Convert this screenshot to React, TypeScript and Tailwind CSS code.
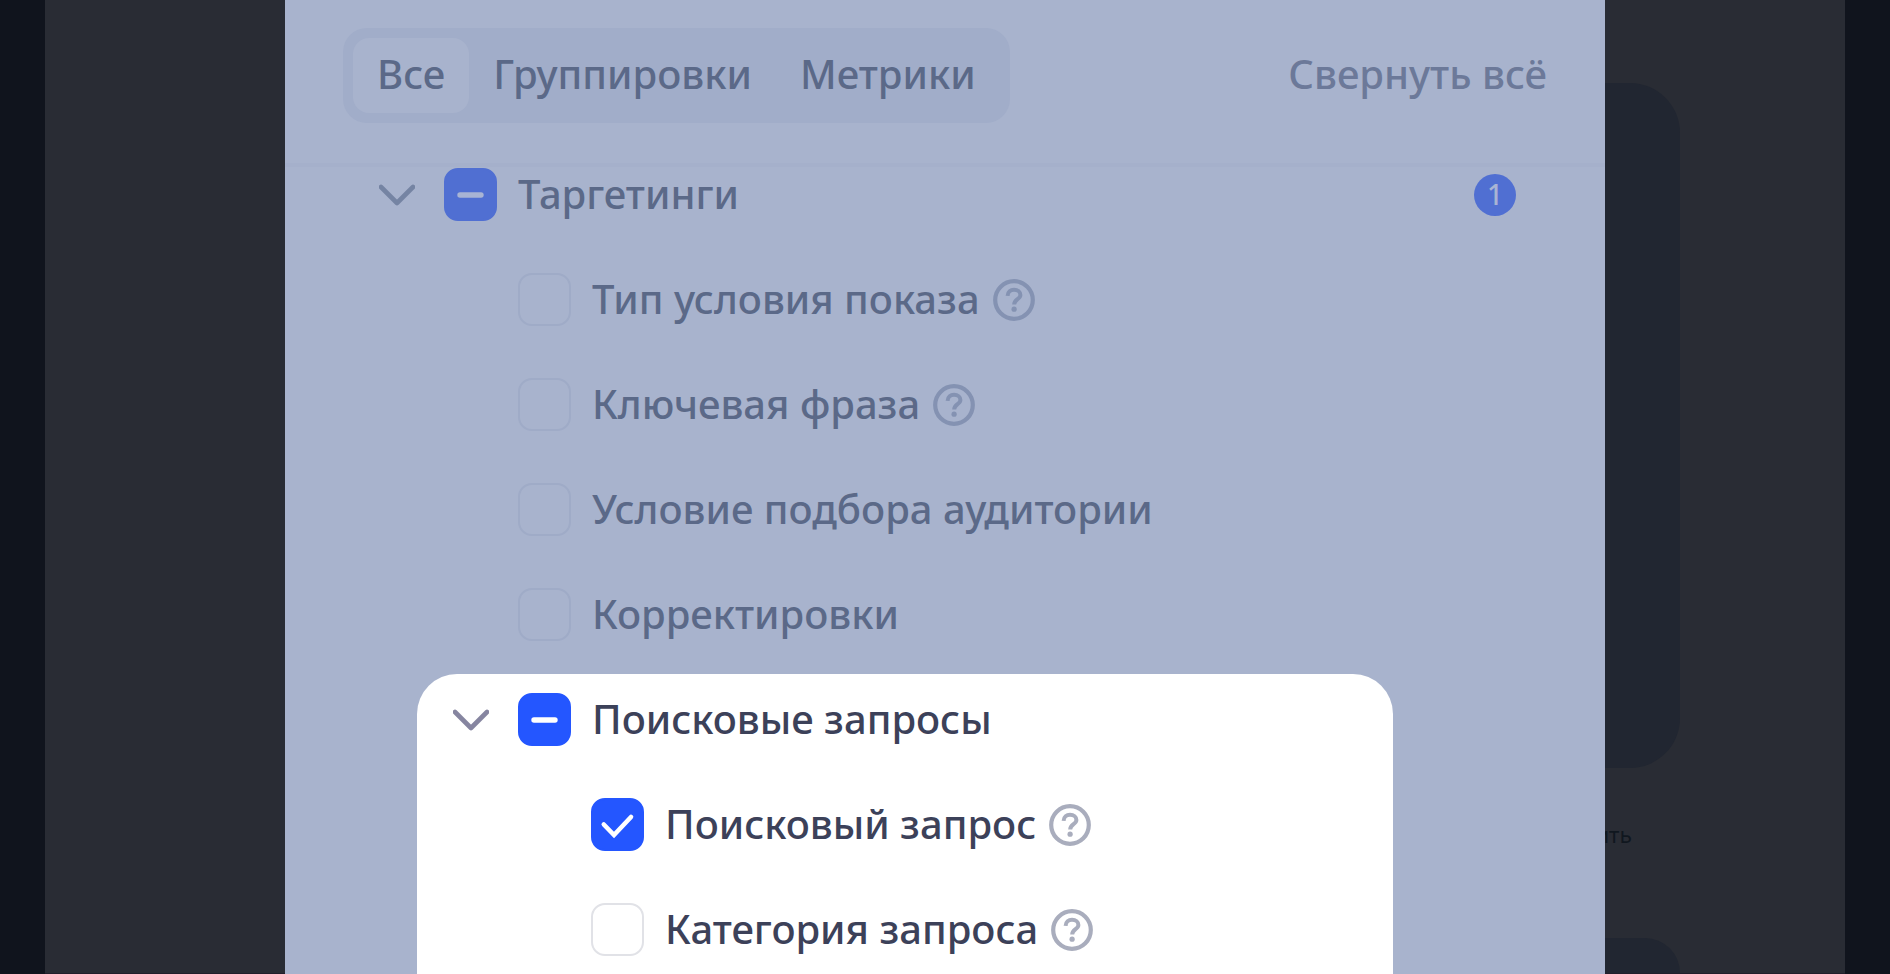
import { useEffect, useRef, useState } from "react";
import type { ReactNode } from "react";

type Tone = "dim" | "bright";

const tones = {
  dim: {
    text: "text-[#5b6988]",
    chevron: "text-[#7584a3]",
    help: "text-[#8492b2]",
    filled: "border-[#506fd2] bg-[#506fd2]",
    empty: "border-[#9fabc7] bg-transparent",
    mark: "text-[#a8b4d4]",
  },
  bright: {
    text: "text-[#3c4159]",
    chevron: "text-[#8685a0]",
    help: "text-[#a9adbd]",
    filled: "border-[#2456ff] bg-[#2456ff]",
    empty: "border-[#e1e2e7] bg-white",
    mark: "text-white",
  },
};

function Chevron({ tone }: { tone: Tone }) {
  return (
    <button type="button" aria-label="Свернуть" className={`shrink-0 ${tones[tone].chevron}`}>
      <svg viewBox="0 0 36 36" className="size-9" fill="none" stroke="currentColor" strokeWidth="4.6">
        <path d="M2 10 L18 26 L34 10" strokeLinecap="round" strokeLinejoin="round" />
      </svg>
    </button>
  );
}

function HelpIcon({ tone }: { tone: Tone }) {
  return (
    <button type="button" aria-label="Подсказка" className={`shrink-0 ${tones[tone].help}`}>
      <svg viewBox="0 0 42 42" className="size-[42px]" fill="none" stroke="currentColor">
        <circle cx="21" cy="21" r="18.8" strokeWidth="4.2" />
        <path
          d="M14.6 16.8 C14.8 12.8 17.6 10.8 21 10.8 C24.8 10.8 27.4 12.9 27.4 16 C27.4 20.2 21.2 20.2 21.2 25.4"
          strokeWidth="4"
        />
        <circle cx="21.1" cy="30.2" r="2.6" fill="currentColor" stroke="none" />
      </svg>
    </button>
  );
}

type CheckProps = {
  id: string;
  tone: Tone;
  label: string;
  initial?: boolean;
  mixed?: boolean;
};

function Check({ id, tone, label, initial = false, mixed = false }: CheckProps) {
  const ref = useRef<HTMLInputElement>(null);
  const [checked, setChecked] = useState(initial);
  const [partial, setPartial] = useState(mixed);
  const t = tones[tone];

  useEffect(() => {
    if (ref.current) ref.current.indeterminate = partial;
  }, [partial]);

  return (
    <>
      <span className="grid shrink-0 place-items-center">
        <input
          ref={ref}
          id={id}
          type="checkbox"
          checked={checked}
          onChange={(e) => {
            setPartial(false);
            setChecked(e.target.checked);
          }}
          className={`col-start-1 row-start-1 size-[53px] appearance-none rounded-[14px] border-2 ${
            checked || partial ? t.filled : t.empty
          }`}
        />
        {(checked || partial) && (
          <svg
            viewBox="0 0 53 53"
            className={`pointer-events-none col-start-1 row-start-1 size-[53px] ${t.mark}`}
            fill="none"
            stroke="currentColor"
            strokeLinecap="round"
          >
            {partial ? (
              <path d="M16 27 H37" strokeWidth="5.4" />
            ) : (
              <path d="M12.8 26.5 L23 37 L40 19" strokeWidth="4.6" />
            )}
          </svg>
        )}
      </span>
      <label htmlFor={id} className={`ml-[21px] pb-[2px] whitespace-nowrap ${t.text}`}>
        {label}
      </label>
    </>
  );
}

function Row({ className, children }: { className: string; children: ReactNode }) {
  return <div className={`flex items-center ${className}`}>{children}</div>;
}

const conditions = [
  { id: "type", label: "Тип условия показа", help: true },
  { id: "phrase", label: "Ключевая фраза", help: true },
  { id: "audience", label: "Условие подбора аудитории", help: false },
  { id: "adjust", label: "Корректировки", help: false },
];

const queries = [
  { id: "query", label: "Поисковый запрос", checked: true },
  { id: "category", label: "Категория запроса", checked: false },
];

const tabs = ["Все", "Группировки", "Метрики"];

export default function App() {
  const [active, setActive] = useState("Все");

  return (
    <div className="h-screen overflow-hidden bg-[#10141d] px-[45px] font-['Noto_Sans',sans-serif]">
      <main className="flex h-full flex-col border-b border-[#211f2b] bg-[#292c34] pt-[83px] pr-[165px] pl-[300px]">
        <section className="h-[685px] shrink-0 rounded-[50px] bg-[#212631]" />
        <div className="flex h-[170px] shrink-0 items-center justify-end pr-12 pb-9 font-['Inter',sans-serif] text-[22px] text-[#10171f]">
          <button type="button">Сохранить</button>
        </div>
        <section className="flex-1 rounded-t-[50px] bg-[#212631]" />
      </main>

      <div className="fixed inset-0 flex justify-center overflow-hidden px-6">
        <div
          role="dialog"
          aria-label="Таргетинги"
          className="flex w-full max-w-[1320px] flex-col bg-[#a8b3cd] text-[40px] leading-[48px] font-medium"
        >
          <header className="flex h-[167px] shrink-0 items-start justify-between border-b-4 border-[#a5b0cb] px-[58px] pt-7">
            <div className="flex h-[95px] items-center rounded-3xl bg-[#a1adc9] px-[10px]">
              {tabs.map((tab) => (
                <button
                  key={tab}
                  type="button"
                  onClick={() => setActive(tab)}
                  className={`h-[75px] rounded-2xl px-6 pb-1 text-[#5b6988] ${
                    active === tab ? "bg-[#a8b3cd]" : ""
                  }`}
                >
                  {tab}
                </button>
              ))}
            </div>
            <button type="button" className="h-[95px] pb-1 text-[#6c7999]">
              Свернуть всё
            </button>
          </header>

          <div className="-mt-[25px] flex-1">
            <Row className="h-[105px] pl-[94px]">
              <Chevron tone="dim" />
              <span className="w-[29px] shrink-0" />
              <Check id="targeting" tone="dim" label="Таргетинги" mixed />
              <span className="mr-[89px] ml-auto flex size-[42px] items-center justify-center rounded-full bg-[#506fd2] pb-[2px] text-[28px] leading-[28px] text-[#a8b4d4]">
                1
              </span>
            </Row>
            {conditions.map((item) => (
              <Row key={item.id} className="h-[105px] pl-[233px]">
                <Check id={item.id} tone="dim" label={item.label} />
                {item.help && (
                  <span className="ml-[13px] flex">
                    <HelpIcon tone="dim" />
                  </span>
                )}
              </Row>
            ))}

            <section className="mt-[7px] mr-[212px] ml-[132px] rounded-[40px] bg-white pb-10">
              <Row className="mb-[7px] h-[91px] pl-9">
                <Chevron tone="bright" />
                <span className="w-[29px] shrink-0" />
                <Check id="queries" tone="bright" label="Поисковые запросы" mixed />
              </Row>
              {queries.map((item) => (
                <Row key={item.id} className="h-[105px] pl-[174px]">
                  <Check id={item.id} tone="bright" label={item.label} initial={item.checked} />
                  <span className="ml-[13px] flex">
                    <HelpIcon tone="bright" />
                  </span>
                </Row>
              ))}
            </section>
          </div>
        </div>
      </div>
    </div>
  );
}
